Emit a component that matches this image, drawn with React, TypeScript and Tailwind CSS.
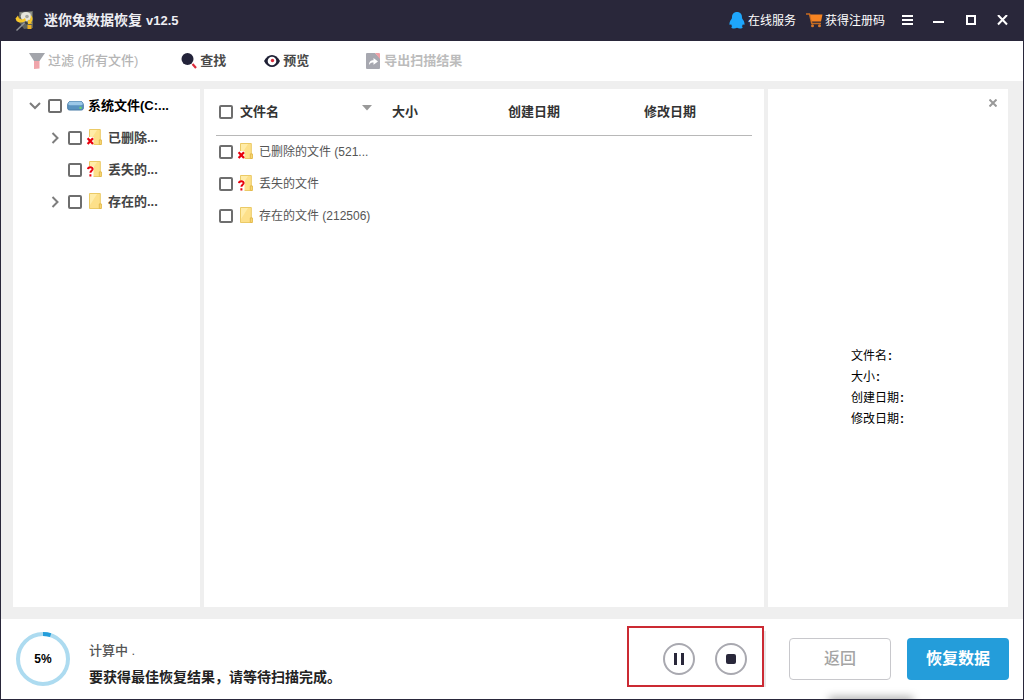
import React from 'react';

type Mark = 'deleted' | 'lost' | 'none';

const treeItems: { id: string; label: string; mark: Mark; expandable: boolean }[] = [
  { id: 'deleted', label: '已删除...', mark: 'deleted', expandable: true },
  { id: 'lost', label: '丢失的...', mark: 'lost', expandable: false },
  { id: 'existing', label: '存在的...', mark: 'none', expandable: true },
];

const files: { id: string; name: string; mark: Mark }[] = [
  { id: 'deleted', name: '已删除的文件 (521...', mark: 'deleted' },
  { id: 'lost', name: '丢失的文件', mark: 'lost' },
  { id: 'existing', name: '存在的文件 (212506)', mark: 'none' },
];

const details = ['文件名', '大小', '创建日期', '修改日期'];

const progress = 5;

const Checkbox: React.FC<{ id: string }> = ({ id }) => (
  <input
    id={id}
    type="checkbox"
    className="h-[14px] w-[14px] shrink-0 appearance-none rounded-[2px] border-2 border-[#6e6e6e] bg-white checked:bg-[#249dda]"
  />
);

const FolderIcon: React.FC<{ mark: Mark }> = ({ mark }) => (
  <svg width="18" height="18" viewBox="0 0 18 18" className="shrink-0">
    <path d="M3.500.5h10.800v10.500h.7v4.500H3.500z" fill="#fde08a" stroke="#ebca66" />
    <path d="M4 1h7L4 12z" fill="#ffeca8" />
    <path d="M13.300 15.500v-4.600h2v4.600z" fill="#fbdc7b" stroke="#e3b94c" />
    {mark === 'deleted' && (
      <g>
        <path d="M0 8h7.500v8H0z" fill="#fff" />
        <path d="M1.600 9.200l5.400 5.800M7 9.200l-5.400 5.800" stroke="#e8000c" strokeWidth="2.200" />
      </g>
    )}
    {mark === 'lost' && (
      <g fill="none">
        <path d="M0 5.500h7.500V16H0z" fill="#fff" />
        <path d="M2 8.200c.2-2.600 4.800-2.500 4.600 0-.2 1.600-2.100 1.600-2.200 3.500M4.400 13.200v2.200" stroke="#e8000c" strokeWidth="2" />
      </g>
    )}
  </svg>
);

const ChevronIcon: React.FC<{ open?: boolean }> = ({ open }) => (
  <svg width="12" height="12" viewBox="0 0 12 12" fill="none" stroke="#7d7d7d" strokeWidth="2">
    <path d={open ? 'M1 3l5 5 5-5' : 'M3.500 1l5 5-5 5'} />
  </svg>
);

const DriveIcon = () => (
  <svg width="17" height="12" viewBox="0 0 17 12">
    <path d="M3 1.500h11c1.200 0 2.300 2 2.300 3.500v3c0 1.500-.8 2-2 2H2.700c-1.300 0-2-.5-2-2V5C.7 3.500 1.800 1.500 3 1.500z" fill="#5a93c0" stroke="#477aa5" />
    <path d="M3.300 1.500h10.400c1 0 1.800 1.200 2 2.500 0 .8-.7 1.200-1.500 1.200H2.800C2 5.200 1.300 4.800 1.300 4c.2-1.300 1-2.500 2-2.500z" fill="#9cc8e8" />
    <path d="M12.500 7.800h2" stroke="#6ee05a" strokeWidth="2" />
  </svg>
);

const LogoIcon = () => (
  <svg width="20" height="22" viewBox="0 0 20 22">
    <path d="M4 2l14-1v17l-9 1-5-7z" fill="#5f625e" />
    <path d="M5 2.500l12-.7v10L7 12.500z" fill="#8d9088" />
    <ellipse cx="11" cy="6.500" rx="5.200" ry="4.500" fill="#e6e6dc" />
    <circle cx="12" cy="6.500" r="1.800" fill="#a3a59f" />
    <path d="M.5 8.500L3 5.500l1 2.800c2 1.600 4.200 1.400 6-.3l1 2.500c-2.700 2.500-6.400 2.500-9.500.4z" fill="#f6c62a" />
    <path d="M15.500 5c2.500 1.800 2.800 5 .6 7.200l1.400 1.300-5 .7.700-4.600 1.200 1c1.200-1.600 1.600-3.300 1.100-5.600z" fill="#f6c62a" />
    <path d="M11 11.500L1.500 20.500" stroke="#8f9397" strokeWidth="1.500" />
    <path d="M10 12l2.500 2" stroke="#3c3c3c" strokeWidth="2" />
    <path d="M12.500 15h4v4h-4z" fill="#efb022" />
  </svg>
);

const PenguinIcon = () => (
  <svg width="16" height="17" viewBox="0 0 16 17" fill="#1ea6fb">
    <path d="M8 0c3.200 0 5 2.200 5 5.200 0 .9.200 1.500.8 2.300 1.400 1.800 2 3.800 1.600 5.200-.3.600-.9.200-1.400-.6-.2.900-.6 1.600-1.200 2.200.6.300.8.700.8 1.100 0 1.300-3.800 1.600-5.600.4-1.800 1.200-5.600.9-5.600-.4 0-.4.200-.8.800-1.100C2.600 13.700 2.200 13 2 12.100c-.5.800-1.100 1.200-1.400.6-.4-1.400.2-3.400 1.600-5.200.6-.8.800-1.400.8-2.300C3 2.200 4.800 0 8 0z" />
  </svg>
);

const CartIcon = () => (
  <svg width="17" height="15" viewBox="0 0 17 15">
    <path d="M0 1h3.500l2.300 9.500H15" fill="none" stroke="#c66b20" strokeWidth="1.500" />
    <path d="M4 1.500h12.500L15 8.500H5.600z" fill="#f78422" />
    <circle cx="6.500" cy="12.800" r="1.500" fill="#d8782a" />
    <circle cx="13.500" cy="12.800" r="1.500" fill="#d8782a" />
  </svg>
);

const TitleBar = () => (
  <header className="flex h-[41px] shrink-0 items-center bg-[#29273a] px-[14px] text-white">
    <LogoIcon />
    <h1 className="ml-[9px] flex items-center gap-1 text-[14px] font-bold text-[#eeeef3]">
      迷你兔数据恢复 <span className="text-[13px]">v12.5</span>
    </h1>
    <nav className="ml-auto flex items-center text-[12px]">
      <a href="#service" className="flex items-center gap-[3px]">
        <PenguinIcon />
        在线服务
      </a>
      <a href="#register" className="ml-[10px] flex items-center gap-[2px]">
        <CartIcon />
        获得注册码
      </a>
    </nav>
    <div className="ml-4 flex items-center gap-5">
      <button aria-label="菜单">
        <svg width="12" height="12" viewBox="0 0 12 12" className="block">
          <path d="M1 1h11M1 5h11M1 9h11" stroke="#fff" strokeWidth="2" />
        </svg>
      </button>
      <button aria-label="最小化">
        <svg width="12" height="12" viewBox="0 0 12 12" className="block">
          <path d="M0 7h11" stroke="#fff" strokeWidth="2" />
        </svg>
      </button>
      <button aria-label="最大化">
        <svg width="12" height="12" viewBox="0 0 12 12" className="block">
          <path d="M2 1h8v8H2z" fill="none" stroke="#fff" strokeWidth="2" />
        </svg>
      </button>
      <button aria-label="关闭">
        <svg width="12" height="12" viewBox="0 0 12 12" className="block">
          <path d="M1 0l9 9.500M10 0L1 9.500" stroke="#fff" strokeWidth="2" />
        </svg>
      </button>
    </div>
  </header>
);

const Toolbar = () => (
  <div className="flex h-10 shrink-0 items-center bg-white pl-7 text-[13px] font-bold text-[#4a4a4a]">
    <button disabled className="flex items-center gap-[3px] font-medium text-[#b5b5b5]">
      <svg width="16" height="16" viewBox="0 0 16 16">
        <path d="M5 6h5.500v9.500L5 16z" fill="#f0a5ab" />
        <path d="M0 0h16l-5.500 8H5z" fill="#a3a5ab" />
      </svg>
      过滤 (所有文件)
    </button>
    <button className="ml-[43px] flex items-center gap-[3px]">
      <svg width="16" height="16" viewBox="0 0 16 16">
        <circle cx="6.500" cy="6" r="6" fill="#23233a" />
        <path d="M11.500 11l3.500 4" stroke="#da2c3c" strokeWidth="2.200" />
      </svg>
      查找
    </button>
    <button className="ml-[38px] flex items-center gap-[3px]">
      <svg width="16" height="14" viewBox="0 0 16 14">
        <path d="M0 7c4-8 12-8 16 0-4 8-12 8-16 0z" fill="#1f2035" />
        <circle cx="8" cy="7" r="4.300" fill="#fff" />
        <circle cx="8.500" cy="6.500" r="1.700" fill="#da2c3c" />
      </svg>
      预览
    </button>
    <button disabled className="ml-[57px] flex items-center gap-1 text-[#bcbcbc]">
      <svg width="14" height="16" viewBox="0 0 14 16">
        <path d="M1 0h8l5 5v10a1 1 0 0 1-1 1H1a1 1 0 0 1-1-1V1a1 1 0 0 1 1-1z" fill="#a7a8b0" />
        <path d="M9 0h4a1 1 0 0 1 1 1v5z" fill="#f0a0a6" />
        <path d="M3 12c0-3.500 2-4.800 4.500-4.800V5L12 8.500l-4.500 3.300V9.600C5.500 9.600 4 10.200 3 12z" fill="#fff" />
      </svg>
      导出扫描结果
    </button>
  </div>
);

const TreePanel = () => (
  <aside className="w-[187px] shrink-0 bg-white pt-px text-[13px] font-bold">
    <div className="flex h-8 items-center pl-4">
      <button aria-label="收起">
        <ChevronIcon open />
      </button>
      <span className="ml-[7px] flex items-center">
        <Checkbox id="tree-root" />
      </span>
      <label htmlFor="tree-root" className="ml-[5px] flex items-center gap-1 text-black">
        <DriveIcon />
        系统文件(C:...
      </label>
    </div>
    {treeItems.map((item) => (
      <div key={item.id} className="flex h-8 items-center pl-9">
        <span className="flex w-[19px] items-center">
          {item.expandable && (
            <button aria-label="展开">
              <ChevronIcon />
            </button>
          )}
        </span>
        <Checkbox id={`tree-${item.id}`} />
        <label htmlFor={`tree-${item.id}`} className="ml-1 flex items-center gap-1 text-[#444]">
          <FolderIcon mark={item.mark} />
          {item.label}
        </label>
      </div>
    ))}
  </aside>
);

const FilePanel = () => (
  <section className="min-w-0 flex-1 bg-white px-3">
    <table className="w-full table-fixed text-left text-[12px] text-[#555]">
      <thead className="border-b border-[#b8b8b8] text-[13px] text-[#333]">
        <tr className="h-[46px]">
          <th className="w-[168px] pl-[3px]">
            <div className="flex items-center gap-[7px]">
              <Checkbox id="file-all" />
              <label htmlFor="file-all">文件名</label>
              <svg width="10" height="6" viewBox="0 0 10 6" className="mb-2 ml-auto mr-3">
                <path d="M0 0h10L5 5.500z" fill="#999" />
              </svg>
            </div>
          </th>
          <th className="w-[116px] pl-2">大小</th>
          <th className="w-[136px] pl-2">创建日期</th>
          <th className="pl-2">修改日期</th>
        </tr>
      </thead>
      <tbody>
        {files.map((file) => (
          <tr key={file.id} className="h-8">
            <td className="pl-[3px] pt-[2px]">
              <div className="flex items-center gap-1">
                <Checkbox id={`file-${file.id}`} />
                <label htmlFor={`file-${file.id}`} className="flex items-center gap-1 whitespace-nowrap">
                  <FolderIcon mark={file.mark} />
                  {file.name}
                </label>
              </div>
            </td>
            <td />
            <td />
            <td />
          </tr>
        ))}
      </tbody>
    </table>
  </section>
);

const PreviewPanel = () => (
  <aside className="flex w-[240px] shrink-0 flex-col bg-white">
    <button aria-label="关闭预览" className="mr-[11px] mt-[10px] self-end">
      <svg width="8" height="8" viewBox="0 0 8 8" className="block">
        <path d="M.5.5l7 7M7.500.5l-7 7" stroke="#999" strokeWidth="2" />
      </svg>
    </button>
    <ul className="my-auto pl-[83px] pt-[62px] text-[12px] leading-[21px] text-black">
      {details.map((label) => (
        <li key={label}>
          {label}
          <b className="pl-px">:</b>
        </li>
      ))}
    </ul>
  </aside>
);

const ProgressRing = () => (
  <div className="relative h-14 w-14 shrink-0">
    <svg width="56" height="56" viewBox="0 0 56 56" fill="none" strokeWidth="4">
      <circle cx="28" cy="28" r="25" stroke="#addbf0" />
      <circle
        cx="28"
        cy="28"
        r="25"
        stroke="#249dda"
        pathLength={100}
        strokeDasharray={`${progress} 100`}
        transform="rotate(-90 28 28)"
      />
    </svg>
    <span className="absolute inset-0 flex items-center justify-center text-[12px] font-bold text-black">
      {progress}%
    </span>
  </div>
);

const Footer = () => (
  <footer className="relative flex h-20 shrink-0 items-center overflow-hidden bg-white px-[14px]">
    <ProgressRing />
    <div className="ml-[18px] flex flex-col pt-[10px]">
      <p className="text-[13px] font-medium leading-[26px] text-[#555]">计算中 .</p>
      <p className="text-[14px] font-bold leading-[26px] text-[#222]">要获得最佳恢复结果，请等待扫描完成。</p>
    </div>
    <div className="mb-[5px] ml-auto flex h-[61px] w-[137px] items-center gap-5 border-2 border-[#cb2a33] pl-[34px] pt-1">
      <button aria-label="暂停" className="flex h-8 w-8 items-center justify-center rounded-full border-2 border-[#a9a9b0]">
        <svg width="12" height="12" viewBox="0 0 12 12">
          <path d="M2.500 0v12M9.500 0v12" stroke="#29273a" strokeWidth="3" />
        </svg>
      </button>
      <button aria-label="停止" className="flex h-8 w-8 items-center justify-center rounded-full border-2 border-[#a9a9b0]">
        <span className="h-[10px] w-[10px] rounded-[2px] bg-[#29273a]" />
      </button>
    </div>
    <div className="h-14 w-[2px] bg-[#e8e8e8]" />
    <button className="ml-[23px] h-[42px] w-[102px] rounded-[4px] border border-[#c8c8cc] text-[16px] font-medium text-[#a5a5a5]">
      返回
    </button>
    <button className="ml-4 h-[42px] w-[102px] rounded-[4px] bg-[#249dda] text-[16px] font-bold text-white">
      恢复数据
    </button>
    <div className="absolute -bottom-1 right-28 h-1 w-20 shadow-[0_0_8px_2px_rgba(0,0,0,0.35)]" />
  </footer>
);

const App: React.FC = () => {
  return (
    <div className="flex min-h-screen flex-col border-x border-b border-[#29273a] bg-[#efefef] font-['Liberation_Sans','Noto_Sans_CJK_SC',sans-serif]">
      <TitleBar />
      <Toolbar />
      <main className="flex flex-1 gap-1 pb-3 pl-3 pr-[15px] pt-2">
        <TreePanel />
        <FilePanel />
        <PreviewPanel />
      </main>
      <Footer />
    </div>
  );
};

export default App;
